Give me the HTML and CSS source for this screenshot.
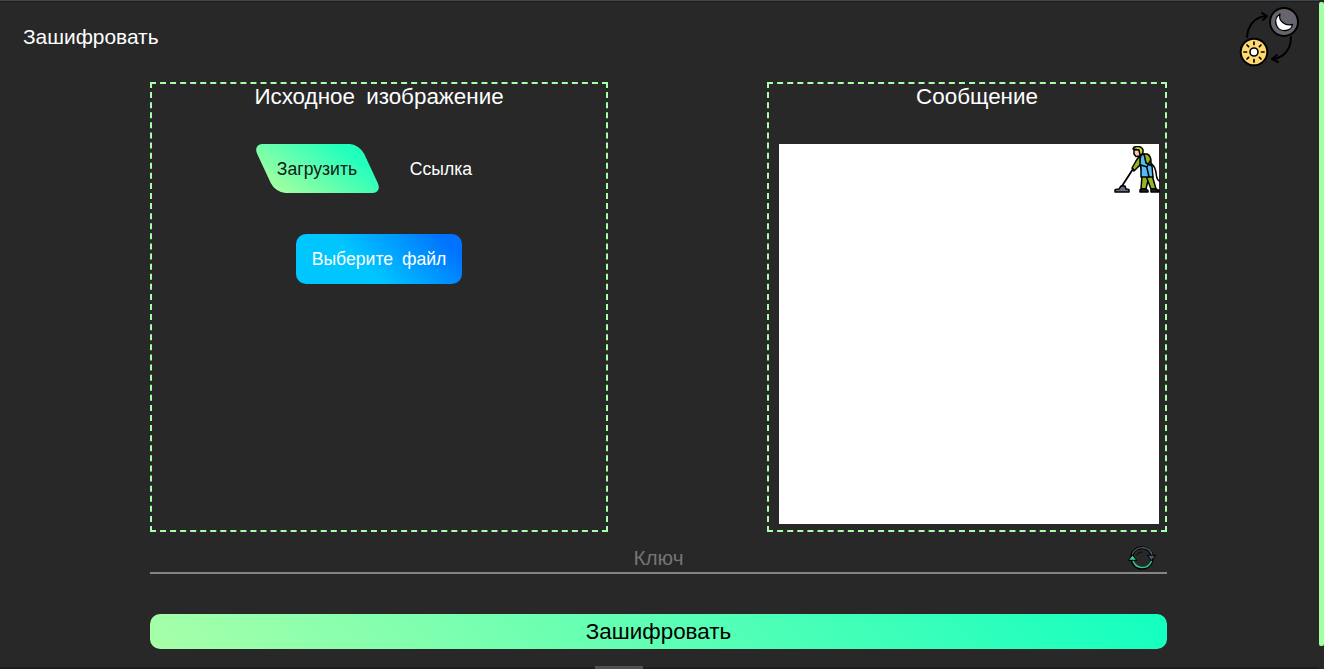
FILE: index.html
```html
<!DOCTYPE html>
<html lang="ru">
<head>
<meta charset="utf-8">
<title>Зашифровать</title>
<link rel="stylesheet" href="styles.css">
</head>
<body>
<div class="page">
  <header class="header">
    <span class="title">Зашифровать</span>
    <svg class="theme" viewBox="0 0 64 64" fill="none" stroke="#000" stroke-width="2" stroke-linecap="round" stroke-linejoin="round">
      <path d="M9 31C10 20 16 11 28 10M24 7l5 3-4 4M53 31c0 11-6 20-17 22M39 49l-5 4 6 3"/>
      <circle cx="46" cy="16" r="14" fill="#67646d"/>
      <path d="M42 8C34 13 38 26 48 24.500c3-.5 6-3 6.500-6C47 20 40 15 42 8Z" fill="#fff" stroke-width="1.300"/>
      <circle cx="16" cy="46" r="13.300" fill="#ffd872"/>
      <circle cx="16" cy="46" r="4" fill="#fff" stroke-width="1.600"/>
      <path stroke-width="1.700" d="M16 36v2.500M16 53.500V56M6 46h2.500M23.500 46H26M9 39l1.600 1.600M21.400 51.400L23 53M9 53l1.600-1.600M21.400 40.600L23 39"/>
    </svg>
  </header>
  <main class="main">
    <div class="panels">
      <section class="panel source">
        <h2 class="heading">Исходное изображение</h2>
        <div class="tabs">
          <button class="tab active"><span>Загрузить</span></button>
          <button class="tab"><span>Ссылка</span></button>
        </div>
        <button class="file">Выберите файл</button>
      </section>
      <section class="panel message">
        <h2 class="heading">Сообщение</h2>
        <div class="editor">
          <svg class="cleaner" viewBox="0 0 46 48" stroke="#000" stroke-width="1.500" stroke-linecap="round" stroke-linejoin="round" fill="none">
            <path d="M36 17c5 2 6 7 6.500 13 .3 3 1 4 3 5"/>
            <path d="M28 30l-1 13h5l3-13z" fill="#94b51f"/>
            <path d="M32 30l5 13h5l-4-14z" fill="#94b51f"/>
            <path d="M28 8h5c3 1 4 4 4 8v5l-4 3-6-1z" fill="#94b51f"/>
            <path d="M27 9l-2 9 2 3v10h12l-1-11-6-3-2-9z" fill="#56bdf2"/>
            <path d="M26 9l-4 6-4 7 2 3 6-6z" fill="#94b51f"/>
            <path d="M36 15l-3 6-6-2M33 22l2 9"/>
            <path d="M20 4l6-1 2 3-2 4-4 .5-2-2.500z" fill="#ffc6b6"/>
            <path d="M19 3c1-4 9-3 10 1 .3 3-1 5-3 5l-1-5z" fill="#ceda38"/>
            <path d="M19 23L8 40" stroke-width="1.800"/>
            <path d="M1 46v-2q0-1 4-1l2-3h4l1 3q3 0 3 1v2z" fill="#67707b"/>
            <path d="M26 46v-2l2-1h4l2 1.500V46zM37 46v-3h5l3 1.500V46z" fill="#222"/>
          </svg>
        </div>
      </section>
    </div>
    <div class="key">
      <input class="key-input" placeholder="Ключ">
      <svg class="refresh" viewBox="0 0 28 24" fill="none" stroke-linecap="round" stroke-linejoin="round">
        <path d="M4 10C6-1 22-1 24 10M24 14C22 25 6 25 4 14" stroke="#000" stroke-width="3.200"/>
        <path d="M4.500 8C9-1 22 0 24 9" stroke="#4a5c6b" stroke-width="1.300"/>
        <path d="M23.500 15C20 24 7 24 4.500 13" stroke="#34c997" stroke-width="1.500"/>
        <path d="M19.500 9.500l4 5 4-5z" fill="#4a5c6b" stroke="#000"/>
        <path d="M.5 14l4-5 4 5z" fill="#34c997" stroke="#000"/>
        <path d="M9 9c1-2 3-3 5-3" stroke="#000"/>
      </svg>
    </div>
    <button class="submit">Зашифровать</button>
  </main>
  <footer class="bottom"><span class="handle"></span></footer>
</div>
<div class="scroll"><div class="thumb"></div></div>
</body>
</html>
```
FILE: styles.css
```css
* { box-sizing: border-box; }
body {
  margin: 0;
  height: 669px;
  display: flex;
  overflow: hidden;
  background: #282828;
  color: #fff;
  font-family: "Liberation Sans", Arial, sans-serif;
}
button { border: 0; padding: 0; background: none; color: inherit; font: inherit; }
.page { width: 1319px; display: flex; flex-direction: column; border-top: 1px solid #41464a; }
.header {
  height: 81px;
  padding: 5px 19px 0 23px;
  display: flex;
  justify-content: space-between;
  align-items: flex-start;
  box-shadow: inset 0 1px #1c1e1f;
}
.title { font-size: 20.900px; line-height: 24px; margin-top: 19px; }
.theme { width: 64px; height: 64px; margin-right: -2px; }
.main { width: 1017px; margin-left: 150px; }
.panels { display: flex; justify-content: space-between; }
.panel {
  height: 450px;
  border: 2px dashed #a8ffa8;
  display: flex;
  flex-direction: column;
  align-items: center;
}
.source { width: 458px; }
.message { width: 400px; padding-left: 10px; align-items: flex-start; }
.heading { margin: 0; font-size: 22.400px; font-weight: 400; line-height: 26px; word-spacing: 5px; }
.message .heading { width: 100%; padding-left: 10px; text-align: center; }
.tabs { display: flex; margin-top: 34px; }
.tab { width: 124px; height: 49px; display: grid; place-items: center; font-size: 17.600px; }
.tab > span { grid-area: 1 / 1; z-index: 1; padding-top: 1px; }
.active { color: #102018; }
.active::before {
  content: "";
  grid-area: 1 / 1;
  width: 107px;
  height: 49px;
  border-radius: 10px;
  transform: skewX(25deg);
  background: linear-gradient(45deg, #a8ffa0, #22ffbc 85%);
}
.file {
  width: 166px;
  height: 50px;
  margin-top: 41px;
  border-radius: 10px;
  background: linear-gradient(45deg, #00c6ff 40%, #0072ff 90%);
  font-size: 17.600px;
  word-spacing: 4px;
}
.editor { width: 380px; height: 380px; margin-top: 34px; background: #fff; display: flex; justify-content: flex-end; align-items: flex-start; }
.cleaner { width: 46px; height: 48px; margin-top: 2px; margin-right: -1px; }
.key { height: 42px; display: flex; align-items: center; border-bottom: 2px solid #858585; padding-top: 11px; }
.key-input {
  flex: 1;
  min-width: 0;
  height: 29px;
  margin-right: -39px;
  padding: 0;
  border: 0;
  outline: 0;
  background: none;
  text-align: center;
  font: 20.800px "Liberation Sans", Arial, sans-serif;
}
.key-input::placeholder { color: #757575; }
.refresh { width: 28px; height: 24px; margin-right: 11px; }
.submit {
  display: block;
  width: 100%;
  height: 35px;
  margin-top: 40px;
  border-radius: 10px;
  background: linear-gradient(45deg, #a8ffa8, #12ffc0);
  color: #000;
  font-size: 22.400px;
}
.bottom { margin-top: auto; height: 3px; border-bottom: 2px solid #1d1e1f; display: flex; }
.handle { width: 48px; height: 3px; margin-left: 595px; background: #505050; }
.scroll { width: 5px; padding-top: 2px; }
.thumb { height: 644px; background: #a3ffa3; border-radius: 2px; }
```
